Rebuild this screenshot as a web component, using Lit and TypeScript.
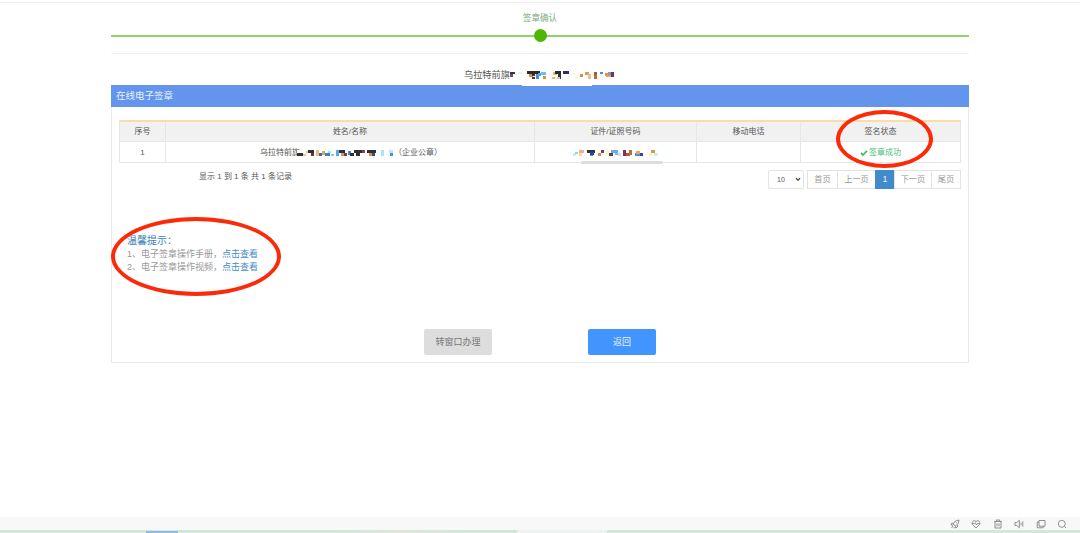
import { LitElement, html, svg, css } from "lit";
import { customElement, property } from "lit/decorators.js";

type Cell = [number, number, number, number, string];

const TITLE_CELLS: Cell[] = [
  [0, 2, 5, 2, "#3a3540"], [0, 4, 3, 3, "#7b3f80"], [9, 2, 3, 2, "#d4fbfb"],
  [17, 1, 13, 3, "#2c2c2c"], [19, 4, 4, 3, "#d8904a"], [22, 4, 3, 2, "#333"], [22, 7, 3, 2, "#6b2f3c"],
  [26, 4, 3, 5, "#4a8fdc"], [28, 3, 3, 3, "#5aa4ea"], [31, 2, 5, 3, "#74bbf4"], [33, 6, 3, 3, "#d59048"],
  [42, 7, 3, 2, "#f0b27c"], [43, 2, 4, 3, "#e9b37b"], [45, 1, 6, 3, "#2c2c2c"], [48, 4, 3, 5, "#333"],
  [47, 7, 3, 2, "#f3c28d"], [53, 1, 6, 3, "#2b2a78"], [56, 2, 3, 1, "#333"],
  [63, 3, 2, 2, "#fff4bd"], [65, 7, 3, 2, "#fff4bd"], [70, 4, 3, 3, "#d59048"], [75, 2, 4, 3, "#dc9a55"],
  [78, 4, 3, 5, "#efbd8d"], [84, 2, 3, 3, "#a05f35"], [84, 5, 3, 4, "#bb6c32"], [90, 2, 3, 2, "#3e94d5"],
  [95, 3, 4, 3, "#dd9445"], [98, 2, 4, 4, "#71a0cc"], [101, 2, 3, 5, "#7c2a70"], [96, 5, 5, 2, "#ed9f50"],
];
const NAME_CELLS: Cell[] = [
  [0, 3, 6, 3, "#303030"], [6, 4, 3, 2, "#f4c898"], [9, 1, 3, 2, "#f6c792"], [11, 0, 6, 3, "#303030"],
  [14, 3, 3, 3, "#553b3b"], [19, 0, 3, 6, "#f2bb7e"], [22, 3, 3, 3, "#316fae"], [25, 1, 3, 4, "#e5a25b"],
  [28, 3, 5, 3, "#3b82c4"], [31, 1, 3, 2, "#a9dcfa"], [34, 4, 3, 2, "#83c9f7"], [39, 0, 3, 6, "#58a7ed"],
  [42, 0, 6, 3, "#303030"], [44, 3, 3, 3, "#df9560"], [47, 3, 3, 3, "#7c3858"], [51, 1, 3, 4, "#418cd4"],
  [53, 3, 4, 3, "#303030"], [57, 0, 8, 3, "#303030"], [59, 3, 4, 3, "#303030"], [65, 0, 3, 3, "#8e3c5c"],
  [70, 0, 9, 3, "#303030"], [72, 3, 3, 3, "#d98d45"], [75, 3, 3, 3, "#24548c"], [84, 0, 3, 6, "#a7e4fc"],
  [92, 0, 4, 3, "#b7ebfc"], [93, 3, 3, 3, "#4d92cf"],
];
const ID_CELLS: Cell[] = [
  [0, 3, 3, 3, "#bcecff"], [2, 2, 3, 2, "#8fd4fa"], [6, 0, 5, 3, "#efb27d"], [6, 3, 3, 3, "#ffd7aa"],
  [14, 0, 8, 3, "#34343d"], [17, 2, 4, 3, "#24479b"], [17, 5, 3, 1, "#488bcc"], [25, 3, 3, 3, "#d88943"],
  [28, 0, 3, 3, "#823752"], [33, 0, 3, 5, "#fff3c1"], [36, 3, 4, 3, "#713544"], [38, 0, 7, 3, "#68aaf0"],
  [42, 3, 3, 2, "#72baf5"], [45, 3, 3, 3, "#b8ebff"], [50, 0, 3, 6, "#862c68"], [53, 3, 4, 3, "#a85b36"],
  [56, 0, 3, 5, "#b4703b"], [62, 3, 8, 3, "#4b91d3"], [63, 1, 4, 3, "#e7a45d"], [67, 3, 3, 3, "#30499a"],
  [76, 3, 3, 3, "#ffeec1"], [78, 0, 4, 3, "#d99743"], [81, 3, 4, 3, "#bff3ff"],
];

@customElement("mosaic-strip")
class MosaicStrip extends LitElement {
  @property({ attribute: false }) cells: Cell[] = [];
  @property({ type: Number }) width = 100;
  static styles = css`
    :host { display: inline-block; line-height: 0; }
    svg { display: block; }
  `;
  render() {
    return html`<svg width=${this.width} height="9" viewBox="0 0 ${this.width} 9">
      ${this.cells.map(([x, y, w, h, c]) => svg`<rect x=${x} y=${y} width=${w} height=${h} fill=${c}></rect>`)}
    </svg>`;
  }
}

@customElement("app-root")
class AppRoot extends LitElement {
  static styles = css`
    :host {
      display: block; position: relative; width: 1080px; height: 533px; overflow: hidden;
      background: #fff; color: #555; font: 8px/12px "Liberation Sans", "Noto Sans CJK SC", sans-serif;
    }
    * { box-sizing: border-box; }
    .page { height: 517px; padding: 2px 111px 0; background: linear-gradient(#f2f2f2, #f2f2f2) 0 2px / 100% 1px no-repeat; }
    .steps { height: 52px; padding-top: 10px; border-bottom: 1px solid #f2f2f2; text-align: center; color: #7cab82; font-size: 8.6px; }
    .track { display: flex; align-items: center; justify-content: center; height: 13px; margin-top: 5px;
      background: linear-gradient(#93d070, #93d070) 0 6px / 100% 2px no-repeat; }
    .dot { width: 13px; height: 13px; border-radius: 50%; background: #4fb606; }
    .title { display: flex; height: 31px; padding: 15px 0 0 353px; font-size: 9.2px; line-height: 13px; color: #555; white-space: nowrap; }
    .title mosaic-strip { margin: 1px 0 0 0; }
    .head { position: relative; height: 22px; padding-left: 5px; background: #6495ed; color: #e8f0ff; font-size: 9.5px; line-height: 22px; }
    .panel { height: 256px; border: 1px solid #ebebeb; border-top: 0; }
    .notch { position: absolute; left: 411px; top: -1px; width: 70px; height: 2px; background: #fff; }
    .body { padding: 13px 7px 0; }
    .grid { display: grid; grid-template-columns: 46px 369px 162px 104px 160px; border-top: 2px solid #fcdca6; border-left: 1px solid #e8e8e8; }
    .grid > div { display: flex; align-items: center; justify-content: center; height: 21px; padding-top: 1px; border-right: 1px solid #e6e6e6; border-bottom: 1px solid #e6e6e6; white-space: nowrap; }
    .grid > .th { height: 20px; padding-top: 0; background: #f1f1f1; }
    .grid > .id { position: relative; }
    .grid > .name { padding-left: 2px; }
    .name mosaic-strip { margin: 3px 0 0 -3px; background: linear-gradient(#fff, #fff) 0 0 / 3px 6px no-repeat; }
    .id mosaic-strip { margin-top: 3px; }
    .scroll { position: absolute; left: 46px; bottom: -2px; width: 82px; height: 3px; border-radius: 2px; background: #ddd; }
    .ok { color: #43bf73; gap: 1px; }
    .foot { display: flex; justify-content: space-between; padding-left: 80px; margin-top: 7px; }
    .count { padding-top: 1px; }
    .pager { display: flex; color: #999; line-height: 18px; font-size: 8.2px; }
    .select { display: flex; align-items: center; justify-content: space-between; width: 36px; height: 19px; margin-right: 3px; padding: 0 2px 0 8px; border: 1px solid #e3e3e3; border-radius: 2px; color: #555; font-size: 7px; }
    .pg { height: 19px; text-align: center; border: 1px solid #e3e3e3; border-right: 0; }
    .w30 { width: 30px; } .w38 { width: 38px; } .w19 { width: 19px; } .w37 { width: 37px; }
    .last { border-right: 1px solid #e3e3e3; }
    .on { background: #428bca; border-color: #428bca; color: #fff; }
    .tips { margin: 45px 0 0 8px; font-size: 9px; line-height: 12.5px; color: #999; }
    .tips h4 { margin: 0; font-size: 10px; line-height: 14px; font-weight: 400; color: #3c7fbc; }
    .link { color: #428bca; }
    .actions { display: flex; gap: 96px; margin: 56px 0 0 305px; }
    .btn { width: 68px; height: 26px; border-radius: 2px; background: #ddd; color: #777; font-size: 9px; line-height: 26px; text-align: center; }
    .btn.primary { background: #4294ff; color: #eaf3ff; }
    .bar { height: 13px; padding: 0 13px; display: flex; align-items: center; justify-content: flex-end; gap: 11.5px; background: #f8f8f8; }
    .bar svg { margin-top: 1px; width: 10px; height: 10px; fill: none; stroke: #858585; stroke-width: 0.9; }
    .strip { display: grid; grid-template-columns: 146px 32px 339px 90px 473px; height: 3px; background: #f8f8f8; }
    .mint { background: #cfe8db; }
    .pale { background: #ecf3f0; }
    .blue { background: linear-gradient(#cfe8db 1px, #8fbce0 1px); }
    .warm { background: linear-gradient(90deg, #cfe8db 48%, #e0e5d5 65%, #cfe8db 85%); }
    .ring { position: absolute; border: 4px solid #fb2b0a; border-radius: 50%; }
    .r1 { left: 836px; top: 109.5px; width: 97px; height: 58px; }
    .r2 { left: 111px; top: 216.5px; width: 170px; height: 79px; }
  `;
  render() {
    return html`
      <div class="page">
        <div class="steps">签章确认<div class="track"><div class="dot"></div></div></div>
        <div class="title">乌拉特前旗<mosaic-strip .cells=${TITLE_CELLS} .width=${106}></mosaic-strip></div>
        <div class="head">在线电子签章<div class="notch"></div></div>
        <div class="panel body">
          <div class="grid">
            <div class="th">序号</div><div class="th">姓名/名称</div><div class="th">证件/证照号码</div><div class="th">移动电话</div><div class="th">签名状态</div>
            <div>1</div>
            <div class="name">乌拉特前旗<mosaic-strip .cells=${NAME_CELLS} .width=${97}></mosaic-strip>（企业公章）</div>
            <div class="id"><mosaic-strip .cells=${ID_CELLS} .width=${86}></mosaic-strip><div class="scroll"></div></div>
            <div></div>
            <div class="ok"><svg width="8" height="8" viewBox="0 0 8 8"><path d="M1 4l2 2 4-4.2" fill="none" stroke="currentColor" stroke-width="1.8"/></svg>签章成功</div>
          </div>
          <div class="foot">
            <div class="count">显示 1 到 1 条 共 1 条记录</div>
            <div class="pager">
              <div class="select">10<svg width="6" height="5" viewBox="0 0 6 5"><path d="M1 1.2l2 2 2-2" fill="none" stroke="#444" stroke-width="1.3"/></svg></div>
              <div class="pg w30">首页</div><div class="pg w38">上一页</div><div class="pg w19 on">1</div><div class="pg w37">下一页</div><div class="pg w30 last">尾页</div>
            </div>
          </div>
          <div class="tips">
            <h4>温馨提示：</h4>
            <div>1、电子签章操作手册，<span class="link">点击查看</span></div>
            <div>2、电子签章操作视频，<span class="link">点击查看</span></div>
          </div>
          <div class="actions"><div class="btn">转窗口办理</div><div class="btn primary">返回</div></div>
        </div>
      </div>
      <div class="bar">
        <svg viewBox="0 0 10 10"><path d="M4 6L3 5l2.5-3L9 1 8.3 4.2 5.5 7zM3.2 4.2H1.6L1 6l2 .2M5.5 7l.2 2 1.7-1 .3-2M3 7L1.5 9M4.3 8L4 9.3M6 3.3l1 1"/></svg>
        <svg viewBox="0 0 10 10"><path d="M5 9L1.5 5.5C0 3 2.8.3 5 2.6 7.2.3 10 3 8.5 5.5zM1 4.6h2.3l1-1 1.2 2.4 1-1.4H9"/></svg>
        <svg viewBox="0 0 10 10"><path d="M1.2 2.5h7.6M3.3 2.3V1h3.4v1.3M2 2.6V9h6V2.6M4 4.3v3M6 4.3v3"/></svg>
        <svg viewBox="0 0 10 10"><path d="M1 3.5h1.8L5.3 1.3v7.4L2.8 6.5H1zM7 3.6v2.8M8.8 2.3v5.4"/></svg>
        <svg viewBox="0 0 10 10"><path d="M3 1.5h6v5.7H3zM3 3H1.2v5.8h6V7.2"/></svg>
        <svg viewBox="0 0 10 10"><circle cx="4.8" cy="4.8" r="3.5"/><path d="M7.3 7.3L9 9"/></svg>
      </div>
      <div class="strip"><div class="mint"></div><div class="blue"></div><div class="warm"></div><div class="pale"></div><div class="mint"></div></div>
      <div class="ring r1"></div><div class="ring r2"></div>
    `;
  }
}
